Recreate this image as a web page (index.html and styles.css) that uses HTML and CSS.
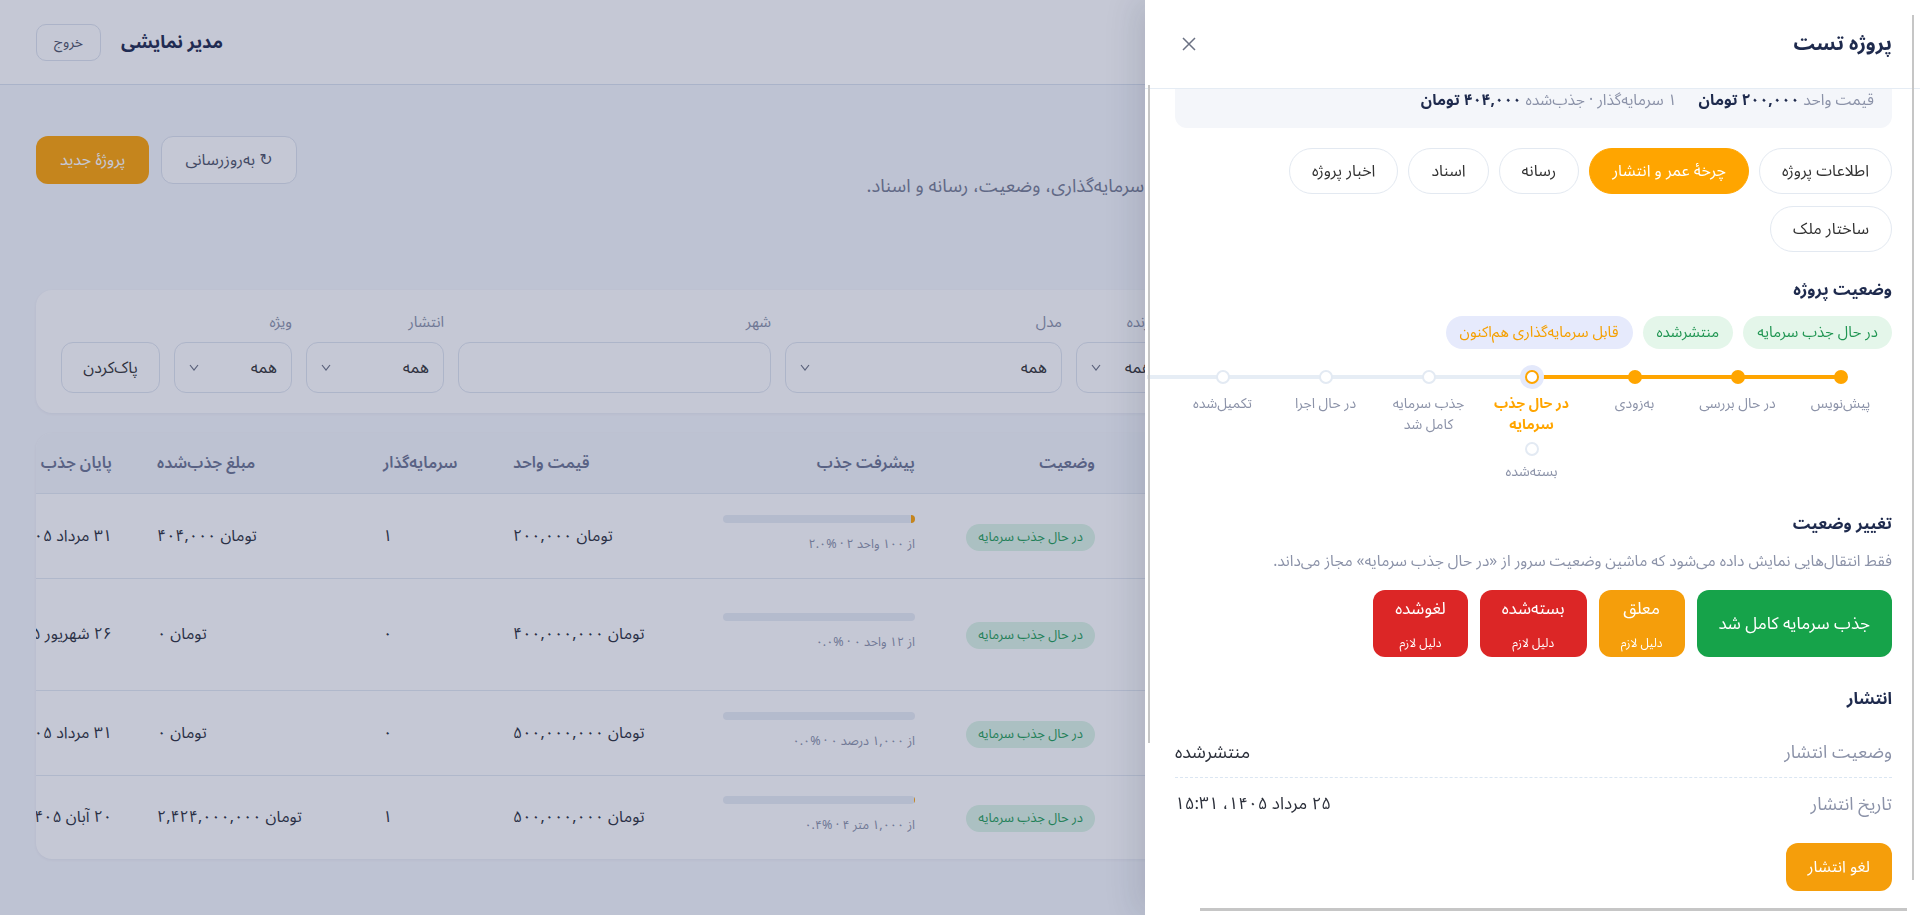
FILE: index.html
```html
<!DOCTYPE html>
<html lang="fa" dir="rtl">
<head>
  <meta charset="utf-8">
  <title>مدیریت پروژه‌ها</title>
  <link rel="stylesheet" href="styles.css">
</head>
<body>
  <!-- Top bar -->
  <header class="topbar">
    <svg class="logo" viewBox="0 0 40 40" aria-label="لوگو">
      <rect x="2" y="2" width="36" height="36" rx="10" fill="#ffa500"/>
      <path d="M12 28 V16 L20 11 L28 16 V28 Z" fill="#fff"/>
    </svg>
    <div class="user">
      <span class="user-name">مدیر نمایشی</span>
      <button class="btn btn-outline btn-sm">خروج</button>
    </div>
  </header>

  <main class="page">
    <div class="page-head">
      <p class="lead">ساخت و انتشار پروژه‌ها و مدیریت جزئیات هر پروژه از پیش‌نویس تا تکمیل، شامل اطلاعات و فرایندهای سرمایه‌گذاری، وضعیت، رسانه و اسناد.</p>
      <div class="page-actions">
        <button class="btn btn-outline">↻ به‌روزرسانی</button>
        <button class="btn btn-primary">پروژهٔ جدید</button>
      </div>
    </div>

    <!-- Filters -->
    <section class="card filters">
      <div class="field">
        <span class="field-label">جستجو</span>
        <div class="control"></div>
      </div>
      <div class="field">
        <span class="field-label">وضعیت</span>
        <div class="control select"><span>همه</span><svg class="chev" viewBox="0 0 10 7"><polyline points="1,1 5,6 9,1"/></svg></div>
      </div>
      <div class="field">
        <span class="field-label">سازنده</span>
        <div class="control select"><span>همه</span><svg class="chev" viewBox="0 0 10 7"><polyline points="1,1 5,6 9,1"/></svg></div>
      </div>
      <div class="field">
        <span class="field-label">مدل</span>
        <div class="control select"><span>همه</span><svg class="chev" viewBox="0 0 10 7"><polyline points="1,1 5,6 9,1"/></svg></div>
      </div>
      <div class="field">
        <span class="field-label">شهر</span>
        <div class="control"></div>
      </div>
      <div class="field">
        <span class="field-label">انتشار</span>
        <div class="control select"><span>همه</span><svg class="chev" viewBox="0 0 10 7"><polyline points="1,1 5,6 9,1"/></svg></div>
      </div>
      <div class="field">
        <span class="field-label">ویژه</span>
        <div class="control select"><span>همه</span><svg class="chev" viewBox="0 0 10 7"><polyline points="1,1 5,6 9,1"/></svg></div>
      </div>
      <div class="field field-end">
        <button class="control btn-clear">پاک‌کردن</button>
      </div>
    </section>

    <!-- Projects table -->
    <section class="card table-card">
      <table class="projects">
        <colgroup>
          <col class="w-name"><col class="w-status">
          <col class="w-progress"><col class="w-price"><col class="w-investors"><col class="w-raised"><col class="w-end">
        </colgroup>
        <thead>
          <tr>
            <th>پروژه</th>
            <th>وضعیت</th>
            <th>پیشرفت جذب</th>
            <th class="ltr">قیمت واحد</th>
            <th class="ltr">سرمایه‌گذار</th>
            <th class="ltr">مبلغ جذب‌شده</th>
            <th class="end">پایان جذب</th>
          </tr>
        </thead>
        <tbody>
          <tr>
            <td>پروژه تست</td>
            <td><span class="badge badge-green">در حال جذب سرمایه</span></td>
            <td>
              <div class="bar"><span style="width: 2%"></span></div>
              <div class="bar-note">از ۱۰۰ واحد ۲ · <span dir="ltr">۲.۰%</span></div>
            </td>
            <td class="ltr">۲۰۰,۰۰۰ تومان</td>
            <td class="ltr">۱</td>
            <td class="ltr">۴۰۴,۰۰۰ تومان</td>
            <td class="end">۳۱ مرداد ۱۴۰۵</td>
          </tr>
          <tr class="tall">
            <td>مجتمع مسکونی<br>باغ نارنج</td>
            <td><span class="badge badge-green">در حال جذب سرمایه</span></td>
            <td>
              <div class="bar"><span style="width: 0%"></span></div>
              <div class="bar-note">از ۱۲ واحد ۰ · <span dir="ltr">۰.۰%</span></div>
            </td>
            <td class="ltr">۴۰۰,۰۰۰,۰۰۰ تومان</td>
            <td class="ltr">۰</td>
            <td class="ltr">۰ تومان</td>
            <td class="end">۲۶ شهریور ۱۴۰۵</td>
          </tr>
          <tr>
            <td>برج اداری آسمان</td>
            <td><span class="badge badge-green">در حال جذب سرمایه</span></td>
            <td>
              <div class="bar"><span style="width: 0%"></span></div>
              <div class="bar-note">از ۱,۰۰۰ درصد ۰ · <span dir="ltr">۰.۰%</span></div>
            </td>
            <td class="ltr">۵۰۰,۰۰۰,۰۰۰ تومان</td>
            <td class="ltr">۰</td>
            <td class="ltr">۰ تومان</td>
            <td class="end">۳۱ مرداد ۱۴۰۵</td>
          </tr>
          <tr>
            <td>زمین تجاری پردیس</td>
            <td><span class="badge badge-green">در حال جذب سرمایه</span></td>
            <td>
              <div class="bar"><span style="width: 0.4%"></span></div>
              <div class="bar-note">از ۱,۰۰۰ متر ۴ · <span dir="ltr">۰.۴%</span></div>
            </td>
            <td class="ltr">۵۰۰,۰۰۰,۰۰۰ تومان</td>
            <td class="ltr">۱</td>
            <td class="ltr">۲,۴۲۴,۰۰۰,۰۰۰ تومان</td>
            <td class="end">۲۰ آبان ۱۴۰۵</td>
          </tr>
        </tbody>
      </table>
    </section>
  </main>

  <div class="backdrop"></div>

  <!-- Project drawer -->
  <aside class="drawer">
    <div class="drawer-head">
      <h2>پروژه تست</h2>
      <button class="close" aria-label="بستن">
        <svg viewBox="0 0 16 16"><path d="M2 2 L14 14 M14 2 L2 14"/></svg>
      </button>
    </div>

    <div class="drawer-body">
      <div class="summary">
        <span>قیمت واحد <b>۲۰۰,۰۰۰ تومان</b></span>
        <span>۱ سرمایه‌گذار · جذب‌شده <b>۴۰۴,۰۰۰ تومان</b></span>
      </div>

      <nav class="tabs">
        <button class="tab">اطلاعات پروژه</button>
        <button class="tab active">چرخهٔ عمر و انتشار</button>
        <button class="tab">رسانه</button>
        <button class="tab">اسناد</button>
        <button class="tab">اخبار پروژه</button>
        <button class="tab">ساختار ملک</button>
      </nav>

      <section class="block">
        <h3>وضعیت پروژه</h3>
        <div class="badges">
          <span class="pill pill-green">در حال جذب سرمایه</span>
          <span class="pill pill-green">منتشرشده</span>
          <span class="pill pill-blue">قابل سرمایه‌گذاری هم‌اکنون</span>
        </div>

        <ol class="steps">
          <li class="step done"><span class="dot"></span><span class="step-label">پیش‌نویس</span></li>
          <li class="step done"><span class="dot"></span><span class="step-label">در حال بررسی</span></li>
          <li class="step done"><span class="dot"></span><span class="step-label">به‌زودی</span></li>
          <li class="step current">
            <span class="dot"></span>
            <span class="step-label">در حال جذب سرمایه</span>
            <span class="branch"><span class="dot"></span><span class="step-label">بسته‌شده</span></span>
          </li>
          <li class="step"><span class="dot"></span><span class="step-label">جذب سرمایه کامل شد</span></li>
          <li class="step"><span class="dot"></span><span class="step-label">در حال اجرا</span></li>
          <li class="step"><span class="dot"></span><span class="step-label">تکمیل‌شده</span></li>
        </ol>
      </section>

      <section class="block">
        <h3>تغییر وضعیت</h3>
        <p class="hint">فقط انتقال‌هایی نمایش داده می‌شود که ماشین وضعیت سرور از «در حال جذب سرمایه» مجاز می‌داند.</p>
        <div class="actions">
          <button class="act act-green">جذب سرمایه کامل شد</button>
          <button class="act act-orange">معلق<small>دلیل لازم</small></button>
          <button class="act act-red">بسته‌شده<small>دلیل لازم</small></button>
          <button class="act act-red">لغوشده<small>دلیل لازم</small></button>
        </div>
      </section>

      <section class="block">
        <h3>انتشار</h3>
        <div class="kv">
          <span class="kv-label">وضعیت انتشار</span>
          <span class="kv-value">منتشرشده</span>
        </div>
        <div class="kv">
          <span class="kv-label">تاریخ انتشار</span>
          <span class="kv-value kv-date">۲۵ مرداد ۱۴۰۵، ۱۵:۳۱</span>
        </div>
        <button class="act act-orange act-sm">لغو انتشار</button>
      </section>
    </div>
  </aside>

  <!-- thin overlay scroll thumbs -->
  <div class="thumbs" aria-hidden="true">
    <i class="thumb thumb-drawer-y"></i>
    <i class="thumb thumb-drawer-x"></i>
    <i class="thumb thumb-page-y"></i>
  </div>
</body>
</html>
```

FILE: styles.css
```css
/* General styling */
* {
  box-sizing: border-box;
}

html,
body {
  margin: 0;
  height: 100%;
}

body {
  font-family: "Noto Sans Arabic", "DejaVu Sans", sans-serif;
  font-size: 15px;
  color: #2b2f3a;
  background: #f6f8fc;
  overflow: hidden;
}

button {
  font: inherit;
  cursor: pointer;
}

/* Top bar */
.topbar {
  height: 85px;
  padding: 0 36px;
  display: flex;
  align-items: center;
  justify-content: space-between;
  background: #fff;
  border-bottom: 1px solid #dbe3ef;
}

.logo {
  width: 40px;
  height: 40px;
}

.user {
  display: flex;
  align-items: center;
  gap: 20px;
}

.user-name {
  font-size: 18px;
  font-weight: 700;
  color: #1e2a4d;
}

.btn {
  height: 48px;
  padding: 0 23px;
  border-radius: 12px;
  border: 1px solid transparent;
  font-size: 16px;
}

.btn-sm {
  height: 37px;
  padding: 0 17px;
  border-radius: 10px;
  font-size: 14px;
}

.btn-outline {
  background: #fff;
  border-color: #dde3ee;
  color: #4d5366;
}

.btn-primary {
  background: #ffa404;
  color: #fff;
}

/* Page */
.page {
  padding: 51px 36px 0;
}

.page-head {
  display: flex;
  justify-content: space-between;
  align-items: flex-start;
}

.lead {
  margin: 40px 0 0;
  font-size: 18.4px;
  line-height: 22px;
  color: #767d93;
  white-space: nowrap;
}

.page-actions {
  display: flex;
  gap: 12px;
}

.card {
  background: #fff;
  border-radius: 16px;
  box-shadow: 0 1px 3px rgba(30, 42, 77, 0.06);
}

/* Filters */
.filters {
  margin-top: 92px;
  padding: 22px 25px 20px;
  display: grid;
  grid-template-columns: 1fr 180px 90px 277px 313px 138px 118px 99px;
  gap: 14px;
}

.field {
  display: flex;
  flex-direction: column;
  gap: 10px;
  min-width: 0;
}

.field-end {
  justify-content: flex-end;
}

.field-label {
  font-size: 15px;
  line-height: 20px;
  color: #8b92a8;
  white-space: nowrap;
}

.control {
  height: 51px;
  padding: 0 14px;
  display: flex;
  align-items: center;
  justify-content: space-between;
  border: 1px solid #dfe5ef;
  border-radius: 12px;
  background: #fff;
  font-size: 16px;
  color: #333;
  white-space: nowrap;
}

.chev {
  width: 10px;
  height: 7px;
  fill: none;
  stroke: #6b7183;
  stroke-width: 1.2;
}

.btn-clear {
  justify-content: center;
  width: 100%;
}

/* Projects table */
.table-card {
  margin-top: 20px;
  overflow: hidden;
}

.projects {
  width: 1903px;
  table-layout: fixed;
  border-collapse: collapse;
}

.w-name { width: 773px; }
.w-status { width: 180px; }
.w-progress { width: 231px; }
.w-price { width: 203px; }
.w-investors { width: 130px; }
.w-raised { width: 226px; }
.w-end { width: 160px; }

.projects th,
.projects td {
  padding: 0 16px;
  text-align: right;
  white-space: nowrap;
  vertical-align: middle;
}

.projects th {
  height: 60px;
  background: #f4f7fb;
  border-bottom: 1px solid #e3e9f1;
  font-size: 16px;
  font-weight: 600;
  color: #6b7390;
}

.projects td {
  height: 85px;
  border-bottom: 1px solid #e3e9f1;
  font-size: 16px;
}

.projects tr.tall td {
  height: 112px;
}

.projects tbody tr:last-child td {
  height: 84px;
  border-bottom: none;
}

.projects .ltr {
  direction: ltr;
  text-align: left;
}

.projects .end {
  padding-right: 29px;
}

.badge {
  display: inline-block;
  height: 27px;
  line-height: 27px;
  padding: 0 12px;
  border-radius: 14px;
  font-size: 13px;
}

.badge-green {
  background: #dcf5e5;
  color: #1f9d55;
}

.bar {
  width: 192px;
  height: 8px;
  border-radius: 4px;
  background: #e8edf4;
  overflow: hidden;
}

.bar span {
  display: block;
  height: 100%;
  background: #ffa404;
}

.bar-note {
  margin-top: 8px;
  font-size: 12.5px;
  color: #8b92a8;
}

/* Dimmed page behind the drawer */
.backdrop {
  position: fixed;
  inset: 0;
  background: rgba(40, 52, 100, 0.27);
}

/* Drawer */
.drawer {
  position: fixed;
  top: 0;
  right: 0;
  bottom: 0;
  width: 775px;
  background: #fff;
  overflow: hidden;
  box-shadow: -10px 0 30px rgba(20, 30, 60, 0.12);
}

.drawer-head {
  height: 89px;
  padding: 0 28px 0 30px;
  display: flex;
  align-items: center;
  justify-content: space-between;
  border-bottom: 1px solid #e5ecf4;
}

.drawer-head h2 {
  margin: 0;
  font-size: 20px;
  color: #1e2a4d;
}

.close {
  width: 28px;
  height: 28px;
  padding: 6px;
  border: none;
  background: none;
}

.close svg {
  display: block;
  width: 16px;
  height: 16px;
  stroke: #6b7183;
  stroke-width: 1.5;
}

.drawer-body {
  padding: 0 28px 20px 30px;
}

/* summary strip hangs from the header */
.summary {
  padding: 0 18px 17px;
  border-radius: 0 0 12px 12px;
  background: #f4f6fa;
  display: flex;
  gap: 22px;
  font-size: 15.5px;
  line-height: 22px;
  color: #8b92a8;
}

.summary b {
  color: #1e2a4d;
}

.tabs {
  margin-top: 20px;
  display: flex;
  flex-wrap: wrap;
  gap: 12px 10px;
}

.tab {
  height: 46px;
  padding: 0 22px;
  border: 1px solid #e3e9f1;
  border-radius: 23px;
  background: #fff;
  font-size: 16px;
  color: #333;
}

.tab.active {
  background: #ffa500;
  border-color: #ffa500;
  color: #fff;
}

.block h3 {
  margin: 29px 0 0;
  font-size: 16.5px;
  line-height: 26px;
  color: #1e2a4d;
}

.block:first-of-type h3 {
  margin-top: 25px;
}

.badges {
  margin-top: 13px;
  display: flex;
  gap: 10px;
}

.pill {
  height: 33px;
  line-height: 33px;
  padding: 0 14px;
  border-radius: 17px;
  font-size: 15px;
}

.pill-green {
  background: #e4f6ea;
  color: #219653;
}

.pill-blue {
  background: #e6eafc;
  color: #f5a000;
}

/* Lifecycle stepper */
.steps {
  list-style: none;
  margin: 16px 0 0;
  padding: 0;
  display: flex;
}

.step {
  flex: 0 0 103px;
  position: relative;
  padding-top: 5px;
  display: flex;
  flex-direction: column;
  align-items: center;
  text-align: center;
}

.step::before,
.step::after {
  content: "";
  position: absolute;
  top: 10px;
  height: 4px;
  background: #e6edf5;
}

/* line toward the next step */
.step::before {
  left: 0;
  right: 50%;
}

/* line toward the previous step */
.step::after {
  left: 50%;
  right: 0;
}

.step:first-child::after {
  display: none;
}

.step:last-child::before {
  left: -24px;
}

.step.done::before,
.step.done::after,
.step.current::after {
  background: #ffa500;
}

.dot {
  position: relative;
  z-index: 1;
  width: 14px;
  height: 14px;
  border-radius: 50%;
  border: 2px solid #e3eaf3;
  background: #fff;
}

.step.done > .dot {
  background: #ffa500;
  border-color: #ffa500;
}

.step.current > .dot {
  border-color: #ffa500;
  box-shadow: 0 0 0 5px #e4e9fb;
}

.step-label {
  margin-top: 9px;
  padding: 0 6px;
  font-size: 14px;
  line-height: 21px;
  color: #8b92a8;
}

.step.current > .step-label {
  color: #ffa500;
  font-weight: 700;
}

.branch {
  margin-top: 7px;
  display: flex;
  flex-direction: column;
  align-items: center;
}

.branch .step-label {
  margin-top: 5px;
}

/* Status actions */
.hint {
  margin: 13px 0 0;
  font-size: 15.5px;
  line-height: 22px;
  color: #8b92a8;
}

.actions {
  margin-top: 18px;
  display: flex;
  gap: 12px;
}

.act {
  height: 67px;
  padding: 0 22px;
  border: none;
  border-radius: 12px;
  display: flex;
  flex-direction: column;
  align-items: center;
  justify-content: center;
  color: #fff;
  font-size: 17px;
}

.act small {
  margin-top: 4px;
  font-size: 12px;
}

.act-green { background: #16a34a; }
.act-orange { background: #f59e0b; }
.act-red { background: #dc2626; }

.act-sm {
  height: 48px;
  margin-top: 14px;
  font-size: 16px;
}

/* Publishing */
.kv {
  height: 51px;
  display: flex;
  align-items: center;
  justify-content: space-between;
  font-size: 18px;
}

.kv:first-of-type {
  margin-top: 15px;
  border-bottom: 1px dashed #dbe6f2;
}

.kv-label {
  color: #8b92a8;
}

.kv-value {
  color: #2b2f3a;
}

.kv-date {
  font-size: 17px;
}

/* Scroll thumbs drawn over the drawer edges */
.thumbs {
  position: fixed;
  inset: 0;
  pointer-events: none;
}

.thumb {
  position: absolute;
  background: #c6c6c6;
}

.thumb-drawer-y {
  left: 1148px;
  top: 85px;
  width: 2px;
  height: 658px;
}

.thumb-drawer-x {
  left: 1200px;
  top: 908px;
  width: 707px;
  height: 3px;
}

.thumb-page-y {
  left: 1912px;
  top: 15px;
  width: 2px;
  height: 865px;
}
```
